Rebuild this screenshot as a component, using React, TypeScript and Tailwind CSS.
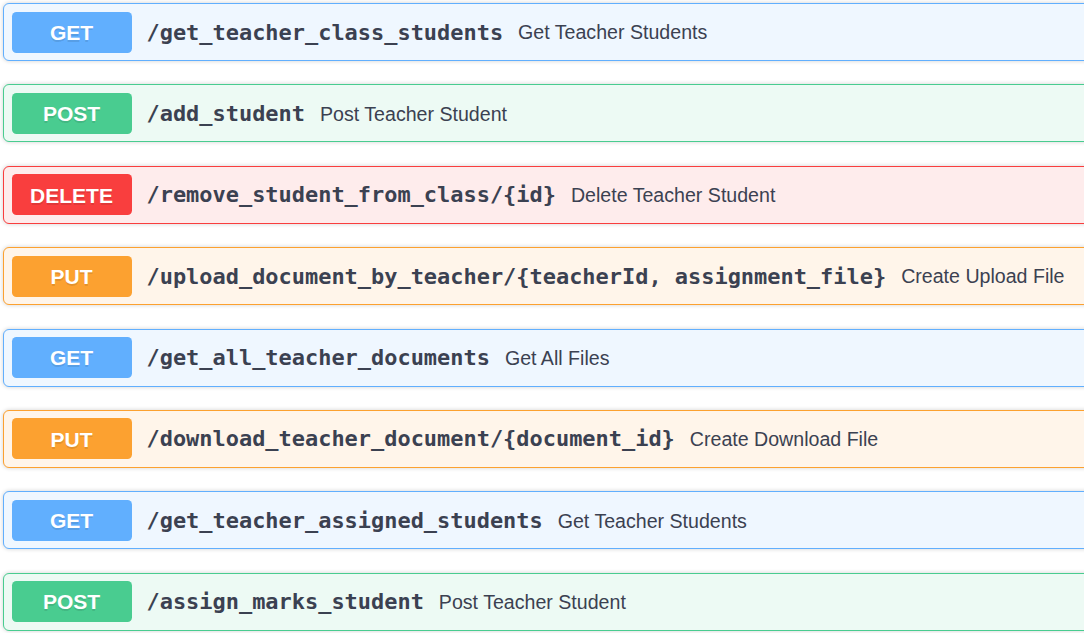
const methodStyles = {
  GET: {
    block: "bg-[#eff7ff] border-[#61affe]",
    button: "bg-[#61affe]",
  },
  POST: {
    block: "bg-[#edfaf4] border-[#49cc90]",
    button: "bg-[#49cc90]",
  },
  DELETE: {
    block: "bg-[#feecec] border-[#f93e3e]",
    button: "bg-[#f93e3e]",
  },
  PUT: {
    block: "bg-[#fff5ea] border-[#fca130]",
    button: "bg-[#fca130]",
  },
};

type Method = keyof typeof methodStyles;

const endpoints: { method: Method; path: string; summary: string }[] = [
  { method: "GET", path: "/get_teacher_class_students", summary: "Get Teacher Students" },
  { method: "POST", path: "/add_student", summary: "Post Teacher Student" },
  { method: "DELETE", path: "/remove_student_from_class/{id}", summary: "Delete Teacher Student" },
  { method: "PUT", path: "/upload_document_by_teacher/{teacherId, assignment_file}", summary: "Create Upload File" },
  { method: "GET", path: "/get_all_teacher_documents", summary: "Get All Files" },
  { method: "PUT", path: "/download_teacher_document/{document_id}", summary: "Create Download File" },
  { method: "GET", path: "/get_teacher_assigned_students", summary: "Get Teacher Students" },
  { method: "POST", path: "/assign_marks_student", summary: "Post Teacher Student" },
];

const App = () => {
  return (
    <div className="w-[1084px] h-[633px] overflow-hidden bg-white pl-[3px] pt-[3px]">
      <div className="flex flex-col gap-[23.4px]">
        {endpoints.map((ep, index) => {
          const style = methodStyles[ep.method];
          return (
            <div
              key={index}
              className={`w-[1110px] flex items-center border rounded-[6px] p-[7.5px] shadow-[0_0_4.5px_rgba(0,0,0,0.19)] ${style.block}`}
            >
              {/* method badge */}
              <div
                className={`w-[120px] h-[41px] shrink-0 flex items-center justify-center rounded-[4.5px] text-white font-bold text-[21px] pt-[1px] [text-shadow:0_1.5px_0_rgba(0,0,0,0.1)] ${style.button}`}
                style={{ fontFamily: '"Liberation Sans", Arial, sans-serif' }}
              >
                {ep.method}
              </div>
              {/* path */}
              <span
                className="px-[15px] pt-[2px] text-[21.95px] font-bold text-[#3b4151] whitespace-nowrap"
                style={{ fontFamily: '"DejaVu Sans Mono", monospace' }}
              >
                {ep.path}
              </span>
              {/* summary */}
              <span
                className="pt-[2px] text-[19.6px] text-[#3b4151] whitespace-nowrap"
                style={{ fontFamily: '"Liberation Sans", Arial, sans-serif' }}
              >
                {ep.summary}
              </span>
            </div>
          );
        })}
      </div>
    </div>
  );
};

export default App;
